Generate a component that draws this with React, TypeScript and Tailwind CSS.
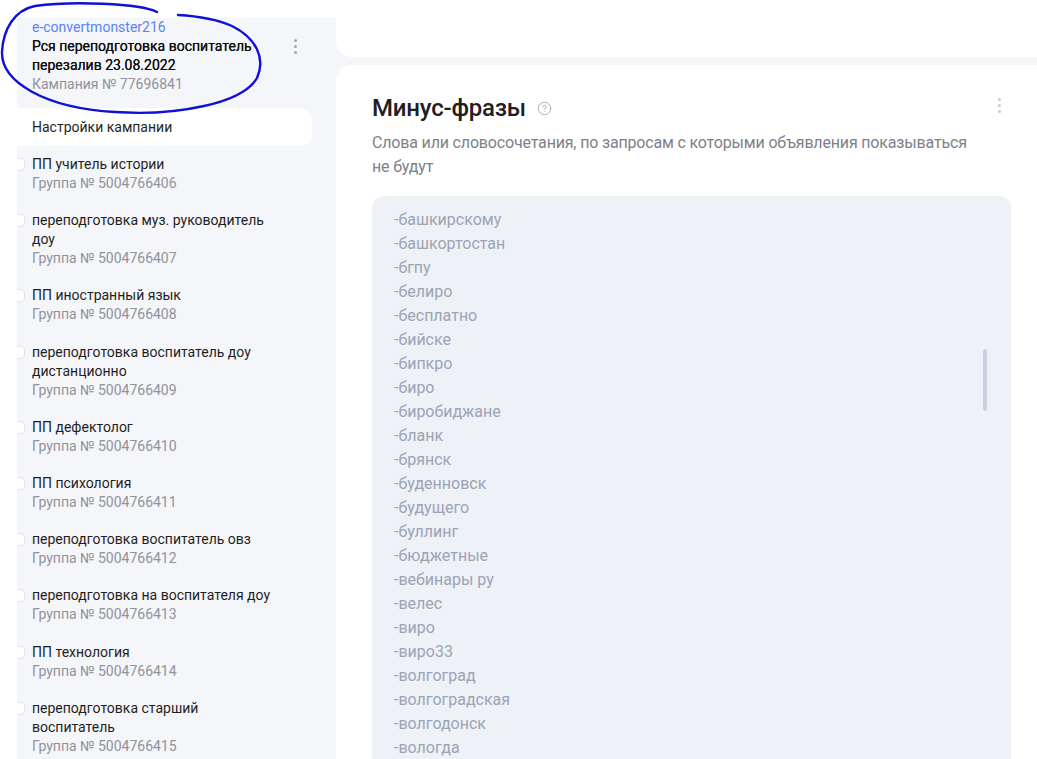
import React from "react";
import { CircleHelp } from "lucide-react";

const GROUPS: { lines: string[]; id: string }[] = [
  { lines: ["ПП учитель истории"], id: "5004766406" },
  { lines: ["переподготовка муз. руководитель", "доу"], id: "5004766407" },
  { lines: ["ПП иностранный язык"], id: "5004766408" },
  { lines: ["переподготовка воспитатель доу", "дистанционно"], id: "5004766409" },
  { lines: ["ПП дефектолог"], id: "5004766410" },
  { lines: ["ПП психология"], id: "5004766411" },
  { lines: ["переподготовка воспитатель овз"], id: "5004766412" },
  { lines: ["переподготовка на воспитателя доу"], id: "5004766413" },
  { lines: ["ПП технология"], id: "5004766414" },
  { lines: ["переподготовка старший", "воспитатель"], id: "5004766415" },
];

const PHRASES = [
  "башкирскому",
  "башкортостан",
  "бгпу",
  "белиро",
  "бесплатно",
  "бийске",
  "бипкро",
  "биро",
  "биробиджане",
  "бланк",
  "брянск",
  "буденновск",
  "будущего",
  "буллинг",
  "бюджетные",
  "вебинары ру",
  "велес",
  "виро",
  "виро33",
  "волгоград",
  "волгоградская",
  "волгодонск",
  "вологда",
];

const Kebab = ({ color }: { color: string }) => (
  <div className="flex flex-col items-center gap-[3px]">
    <span className={`block w-[3px] h-[3px] rounded-full ${color}`} />
    <span className={`block w-[3px] h-[3px] rounded-full ${color}`} />
    <span className={`block w-[3px] h-[3px] rounded-full ${color}`} />
  </div>
);

const Sidebar = () => (
  <div className="w-[319px] flex flex-col shrink-0">
    <div className="h-[18px] bg-white" />
    <div className="flex-1 bg-[#f5f6fa] flex overflow-hidden">
      <div className="w-[311px] shrink-0 overflow-hidden text-[14px] leading-[19px]">
        {/* campaign header */}
        <div className="flex pl-[15px] pr-[31px]">
          <div className="flex-1">
            <div className="text-[#5b83f3]">e-convertmonster216</div>
            <div className="text-[#111] [text-shadow:0_0_0.3px_#111]">
              Рся переподготовка воспитатель
              <br />
              перезалив 23.08.2022
            </div>
            <div className="text-[#8f939c]">Кампания № 77696841</div>
          </div>
          <div className="pt-[21px]">
            <Kebab color="bg-[#a3a6ad]" />
          </div>
        </div>

        <div className="mt-[14px] w-[295px] h-[38px] bg-white rounded-r-xl flex items-center pl-[15px] text-[#1f1f1f]">
          Настройки кампании
        </div>

        {GROUPS.map((g) => (
          <div key={g.id} className="flex py-[9.1px]">
            <div className="-ml-[6px] mt-[3px] w-[14px] h-[13px] shrink-0 rounded-[4px] border border-[#e1e4ea] bg-white" />
            <div className="ml-[7px]">
              {g.lines.map((l) => (
                <div key={l} className="text-[#1f1f1f] whitespace-nowrap">
                  {l}
                </div>
              ))}
              <div className="text-[#8f939c]">Группа № {g.id}</div>
            </div>
          </div>
        ))}
      </div>
      <div className="w-[4px] h-[589px] bg-[#dbdfe8] rounded-b-sm ml-[17px]" />
    </div>
  </div>
);

const MainPanel = () => (
  <div className="flex-1 bg-[#f5f6fa] flex flex-col gap-[8px]">
    <div className="h-[57px] shrink-0 bg-white rounded-bl-2xl" />
    <div className="flex-1 bg-white rounded-tl-2xl pl-[36px] pr-[26px] pt-[29px] overflow-hidden">
      <div className="flex items-center h-[28px]">
        <h1 className="text-[24px] leading-[28px] font-medium text-[#21201f] tracking-[-0.2px]">
          Минус-фразы
        </h1>
        <CircleHelp size={15} strokeWidth={1.4} className="ml-[11px] mt-[1px] text-[#a3a7b0]" />
        <div className="ml-auto mr-[10px] -mt-[6px]">
          <Kebab color="bg-[#c9ccd3]" />
        </div>
      </div>
      <p className="mt-[9px] text-[16px] leading-[24px] text-[#7d818b] tracking-[-0.17px]">
        <span className="whitespace-nowrap">
          Слова или словосочетания, по запросам с которыми объявления показываться
        </span>
        <br />
        не будут
      </p>
      <div className="mt-[17px] bg-[#eef1f6] rounded-xl pl-[22px] pt-[12px] pb-4 flex">
        <div className="flex-1 text-[16px] leading-[24px] text-[#9ca4b5]">
          {PHRASES.map((p) => (
            <div key={p}>-{p}</div>
          ))}
        </div>
        <div className="w-[4px] h-[62px] mt-[141px] mr-[24px] rounded-full bg-[#cbd1e0]" />
      </div>
    </div>
  </div>
);

export default function App() {
  return (
    <div
      className="relative w-[1037px] h-[759px] overflow-hidden bg-white flex"
      style={{ fontFamily: "Roboto, 'Noto Sans', sans-serif" }}
    >
      <div className="w-[17px] shrink-0" />
      <Sidebar />
      <MainPanel />
      {/* hand-drawn annotation */}
      <svg
        className="absolute left-0 top-0 pointer-events-none"
        width="270"
        height="120"
        viewBox="0 0 270 120"
        fill="none"
      >
        <path
          d="M157 12 C140 3 70 1 35 6 C14 10 3 30 2 52 C1 82 45 108 115 112 C175 116 242 104 257 78 C266 58 256 38 232 26 C214 18 196 16 178 15"
          stroke="#1010d6"
          strokeWidth="2.4"
          strokeLinecap="round"
        />
      </svg>
    </div>
  );
}
